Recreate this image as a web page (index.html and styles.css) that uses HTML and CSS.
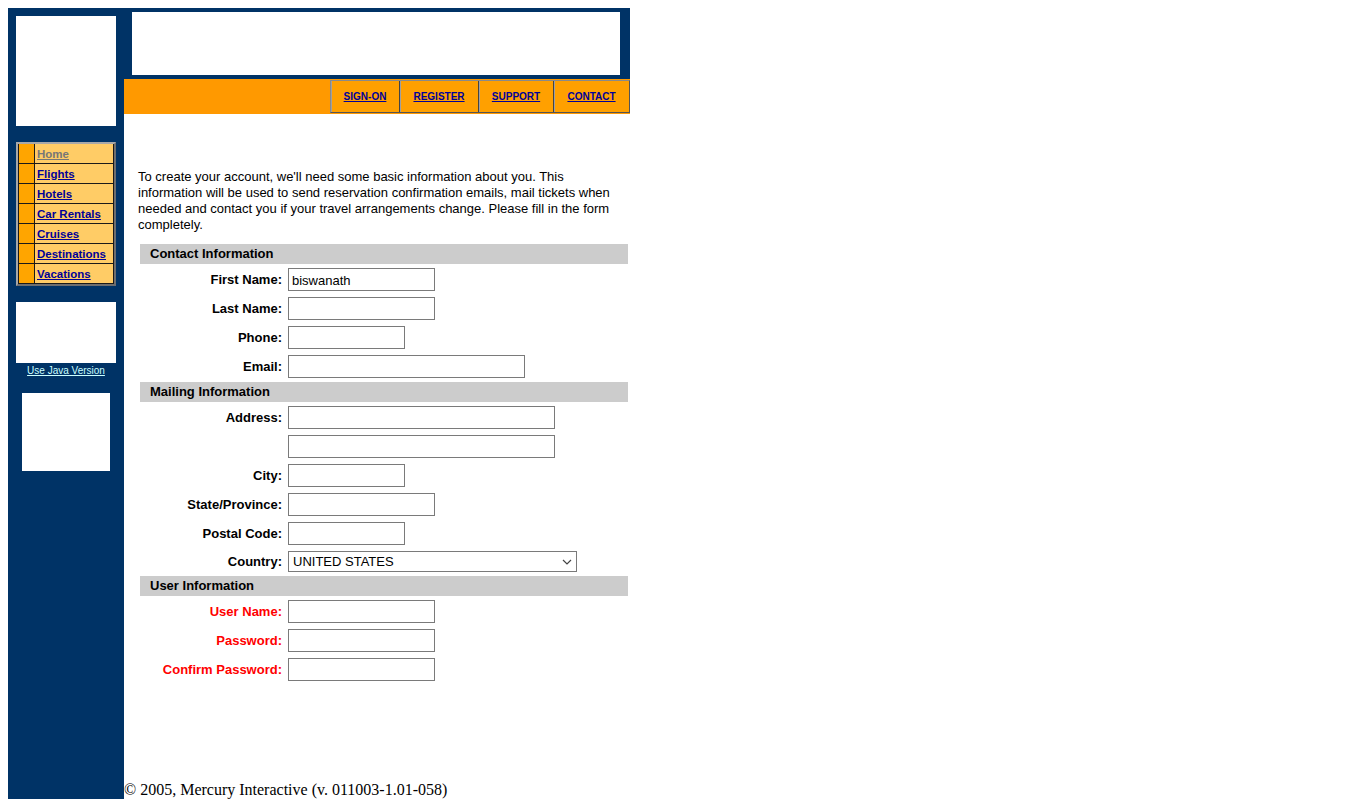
FILE: index.html
```html
<!DOCTYPE html>
<html>
<head>
<meta charset="utf-8">
<title>Register: Mercury Tours</title>
<link rel="stylesheet" href="styles.css">
</head>
<body>
<div class="page">
  <aside class="sidebar">
    <div class="logo-box"></div>
    <div class="menu">
      <div class="m-bullet"></div><div class="m-item"><a class="visited" href="#">Home</a></div>
      <div class="m-bullet"></div><div class="m-item"><a href="#">Flights</a></div>
      <div class="m-bullet"></div><div class="m-item"><a href="#">Hotels</a></div>
      <div class="m-bullet"></div><div class="m-item"><a href="#">Car Rentals</a></div>
      <div class="m-bullet"></div><div class="m-item"><a href="#">Cruises</a></div>
      <div class="m-bullet"></div><div class="m-item"><a href="#">Destinations</a></div>
      <div class="m-bullet"></div><div class="m-item"><a href="#">Vacations</a></div>
    </div>
    <div class="java-box"></div>
    <a class="java-link" href="#">Use Java Version</a>
    <div class="ad-box"></div>
  </aside>
  <main class="main">
    <div class="header">
      <div class="banner"></div>
    </div>
    <nav class="navbar">
      <div class="nav-cells">
        <div class="nav-cell w1"><a href="#">SIGN-ON</a></div>
        <div class="nav-cell w2"><a href="#">REGISTER</a></div>
        <div class="nav-cell w3"><a href="#">SUPPORT</a></div>
        <div class="nav-cell w4"><a href="#">CONTACT</a></div>
      </div>
    </nav>
    <div class="content">
      <p class="intro">To create your account, we'll need some basic information about you. This information will be used to send reservation confirmation emails, mail tickets when needed and contact you if your travel arrangements change. Please fill in the form completely.</p>
      <div class="form">
        <div class="section">Contact Information</div>
        <div class="row"><label class="lbl">First Name:</label><input class="in w147" type="text" value="biswanath"></div>
        <div class="row"><label class="lbl">Last Name:</label><input class="in w147" type="text"></div>
        <div class="row"><label class="lbl">Phone:</label><input class="in w117" type="text"></div>
        <div class="row"><label class="lbl">Email:</label><input class="in w237" type="text"></div>
        <div class="section">Mailing Information</div>
        <div class="row"><label class="lbl">Address:</label><input class="in w267" type="text"></div>
        <div class="row"><label class="lbl"></label><input class="in w267" type="text"></div>
        <div class="row"><label class="lbl">City:</label><input class="in w117" type="text"></div>
        <div class="row"><label class="lbl">State/Province:</label><input class="in w147" type="text"></div>
        <div class="row"><label class="lbl">Postal Code:</label><input class="in w117" type="text"></div>
        <div class="row"><label class="lbl">Country:</label><select class="sel"><option>UNITED STATES</option></select></div>
        <div class="section">User Information</div>
        <div class="row"><label class="lbl req">User Name:</label><input class="in w147" type="text"></div>
        <div class="row"><label class="lbl req">Password:</label><input class="in w147" type="password"></div>
        <div class="row"><label class="lbl req">Confirm Password:</label><input class="in w147" type="password"></div>
      </div>
    </div>
    <div class="footer">&copy; 2005, Mercury Interactive (v. 011003-1.01-058)</div>
  </main>
</div>
</body>
</html>
```

FILE: styles.css
```css
html, body {
  margin: 0;
  padding: 0;
  background: #ffffff;
}
body {
  padding: 8px;
  font-family: "Liberation Serif", "Times New Roman", serif;
}
.page {
  display: flex;
  height: 791px;
  width: 622px;
}
.sidebar {
  width: 116px;
  flex-shrink: 0;
  background: #003366;
  display: flex;
  flex-direction: column;
  align-items: center;
  padding-top: 8px;
  box-sizing: border-box;
}
.logo-box {
  width: 100px;
  height: 110px;
  background: #ffffff;
}
.menu {
  margin-top: 16px;
  width: 100px;
  box-sizing: border-box;
  border: 2px solid;
  border-color: #a8a8a8 #6e6e6e #6e6e6e #a8a8a8;
  background: #1a1a1a;
  padding: 0 1px 1px 1px;
  display: grid;
  grid-template-columns: 15px 1fr;
  grid-auto-rows: 19px;
  gap: 1px;
}
.m-bullet {
  background: #ffa500;
}
.m-item {
  background: #ffcc66;
  display: flex;
  align-items: center;
  padding-left: 2px;
}
.m-item a {
  font-family: "Liberation Sans", Arial, sans-serif;
  font-size: 11.5px;
  font-weight: bold;
  color: #000099;
  text-decoration: underline;
}
.m-item a.visited {
  color: #777777;
}
.java-box {
  margin-top: 16px;
  width: 100px;
  height: 61px;
  background: #ffffff;
}
.java-link {
  margin-top: 2px;
  font-family: "Liberation Sans", Arial, sans-serif;
  font-size: 10px;
  line-height: 12px;
  color: #ccffff;
  text-decoration: underline;
}
.ad-box {
  margin-top: 16px;
  width: 88px;
  height: 78px;
  background: #ffffff;
}
.main {
  width: 506px;
  flex-shrink: 0;
  display: flex;
  flex-direction: column;
}
.header {
  background: #003366;
  padding: 4px 10px 4px 8px;
}
.banner {
  height: 63px;
  background: #ffffff;
}
.navbar {
  background: #ff9900;
  height: 35px;
  box-sizing: border-box;
  padding: 1px 0 1px 0;
  display: flex;
  justify-content: flex-end;
}
.nav-cells {
  display: flex;
  border: 1px solid #8a8a8a;
  border-right-color: #555555;
  border-bottom-color: #555555;
}
.nav-cell {
  display: flex;
  align-items: center;
  justify-content: center;
  background: #ffa000;
  border-left: 1px solid #444444;
  box-shadow: inset 1px 0 0 #a0a0a0;
}
.nav-cell:first-child {
  border-left: none;
}
.nav-cell a {
  font-family: "Liberation Sans", Arial, sans-serif;
  font-size: 10px;
  font-weight: bold;
  color: #000099;
  text-decoration: underline;
}
.w1 { width: 68px; }
.w2 { width: 78px; }
.w3 { width: 74px; }
.w4 { width: 75px; }
.content {
  flex: 1;
  padding-top: 55px;
  font-family: "Liberation Sans", Arial, sans-serif;
}
.intro {
  margin: 0 0 11px 14px;
  width: 482px;
  font-size: 13px;
  line-height: 16px;
  color: #000000;
}
.form {
  margin-left: 16px;
  width: 488px;
}
.section {
  height: 20px;
  background: #cccccc;
  font-size: 13px;
  font-weight: bold;
  line-height: 20px;
  padding-left: 10px;
  margin-top: 4px;
  color: #000000;
}
.section:first-child {
  margin-top: 0;
}
.row {
  display: flex;
  align-items: center;
  margin-top: 6px;
}
.section + .row {
  margin-top: 4px;
}
.lbl {
  width: 142px;
  flex-shrink: 0;
  margin-right: 6px;
  text-align: right;
  font-size: 13px;
  font-weight: bold;
  color: #000000;
}
.lbl.req {
  color: #ff0000;
}
.in {
  height: 23px;
  box-sizing: border-box;
  border: 1px solid #7a7a7a;
  padding: 1px 3px 0 3px;
  margin: 0;
  font-family: "Liberation Sans", Arial, sans-serif;
  font-size: 13px;
  color: #000000;
  background: #ffffff;
  outline: none;
}
.w117 { width: 117px; }
.w147 { width: 147px; }
.w237 { width: 237px; }
.w267 { width: 267px; }
.sel {
  width: 289px;
  height: 21px;
  box-sizing: border-box;
  margin: 0;
  border: 1px solid #7a7a7a;
  border-radius: 0;
  padding: 0 20px 0 4px;
  font-family: "Liberation Sans", Arial, sans-serif;
  font-size: 13px;
  color: #000000;
  -webkit-appearance: none;
  appearance: none;
  background: #ffffff url("data:image/svg+xml;utf8,<svg xmlns='http://www.w3.org/2000/svg' width='10' height='6' viewBox='0 0 10 6'><path d='M1 1l4 4 4-4' fill='none' stroke='%23444' stroke-width='1.2'/></svg>") no-repeat right 4px center;
}
.footer {
  font-family: "Liberation Serif", "Times New Roman", serif;
  font-size: 16px;
  line-height: 18px;
  color: #000000;
}
```
